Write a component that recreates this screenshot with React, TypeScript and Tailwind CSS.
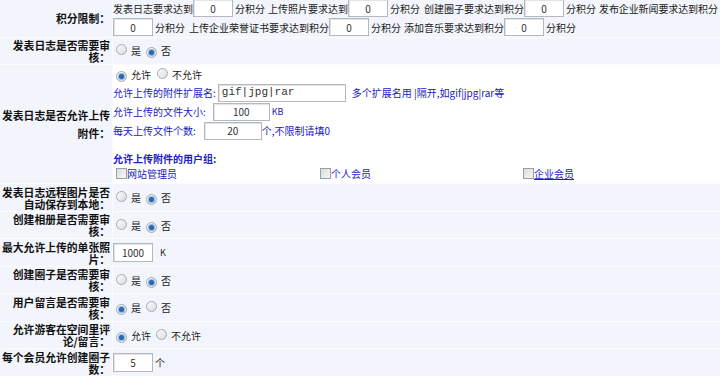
import { ReactNode } from "react";

const cn = (...c: (string | false | undefined)[]) => c.filter(Boolean).join(" ");

const Radio = ({ checked }: { checked?: boolean }) => (
  <span className="inline-flex h-[11px] w-[11px] shrink-0 items-center justify-center rounded-full border border-[#a4abb6] bg-linear-to-br from-[#fbfbfb] to-[#d9dce0]">
    {checked && <span className="h-[5px] w-[5px] rounded-full bg-[#2a68b0] shadow-[0_0_0_1px_#8fb6e0]" />}
  </span>
);

const Check = () => (
  <span className="inline-block h-[11px] w-[11px] shrink-0 border border-[#9a9ea6] bg-linear-to-br from-[#dcdcdc] to-[#f8f8f8]" />
);

const Box = ({ value, className, mono }: { value: string; className?: string; mono?: boolean }) => (
  <span
    className={cn(
      "inline-flex h-[18px] w-[40px] shrink-0 items-center justify-center border border-[#b4b9c1] bg-white text-[10px] text-[#333] shadow-[inset_1px_1px_0_#e4e4e4]",
      mono && "justify-start pl-[3px] font-['Liberation_Mono',monospace] text-[11px]",
      className
    )}
  >
    {value}
  </span>
);

const Row = ({
  label,
  children,
  labelClass,
  contentClass,
  className,
}: {
  label: string;
  children: ReactNode;
  labelClass?: string;
  contentClass?: string;
  className?: string;
}) => (
  <div className={cn("flex min-h-[26.5px]", className)}>
    <div className="flex w-[112px] shrink-0 items-center bg-[#f2f5fb] pr-[2px]">
      <div className={cn("w-full text-right text-[10.8px] font-bold leading-[12px] text-[#111]", labelClass)}>
        {label}
      </div>
    </div>
    <div className={cn("ml-[1px] flex flex-1 items-center bg-[#f2f5fb]", contentClass)}>{children}</div>
  </div>
);

const YesNo = ({ yes, a = "是", b = "否" }: { yes?: boolean; a?: string; b?: string }) => (
  <div className="flex items-center">
    <span className="ml-[3px]">
      <Radio checked={yes} />
    </span>
    <span className="ml-[4px]">{a}</span>
    <span className="ml-[5px]">
      <Radio checked={!yes} />
    </span>
    <span className="ml-[4px]">{b}</span>
  </div>
);

export default function App() {
  const blue = "text-[#2020c4]";
  return (
    <div className="h-[379px] w-[720px] overflow-hidden bg-white font-['Noto_Sans_CJK_SC',sans-serif] text-[10px] text-[#1a1a1a]">
      <div className="-mt-[1px] flex flex-col gap-[1px] bg-[#fbfcfe]">
        <Row label="积分限制：" className="h-[37.5px]" contentClass="flex-col items-start justify-center">
          <div className="flex h-[19px] items-center whitespace-nowrap">
            <span>发表日志要求达到</span>
            <Box value="0" />
            <span className="ml-[2px] mr-[3px]">分积分</span>
            <span>上传照片要求达到</span>
            <Box value="0" />
            <span className="ml-[2px] mr-[4px]">分积分</span>
            <span>创建圈子要求达到积分</span>
            <Box value="0" />
            <span className="ml-[2px] mr-[3px]">分积分</span>
            <span className="tracking-[-0.1px]">发布企业新闻要求达到积分</span>
          </div>
          <div className="flex h-[19px] items-center whitespace-nowrap">
            <Box value="0" />
            <span className="ml-[2px] mr-[4px]">分积分</span>
            <span>上传企业荣誉证书要求达到积分</span>
            <Box value="0" />
            <span className="ml-[2px] mr-[3px]">分积分</span>
            <span>添加音乐要求达到积分</span>
            <Box value="0" />
            <span className="ml-[2px]">分积分</span>
          </div>
        </Row>

        <Row label="发表日志是否需要审核：">
          <YesNo />
        </Row>

        <Row
          label="发表日志是否允许上传附件："
          labelClass="leading-[18px]"
          className="h-[118.25px]"
          contentClass="flex-col items-stretch justify-start bg-white"
        >
          <div className="flex h-[18px] items-center">
            <span className="ml-[3px]">
              <Radio checked />
            </span>
            <span className="ml-[4px]">允许</span>
            <span className="ml-[6px]">
              <Radio />
            </span>
            <span className="ml-[4px]">不允许</span>
          </div>
          <div className={cn("flex h-[19px] items-center whitespace-nowrap", blue)}>
            <span>允许上传的附件扩展名:</span>
            <Box value="gif|jpg|rar" mono className="ml-[2px] w-[128px]" />
            <span className="ml-[6px]">多个扩展名用 |隔开,如gif|jpg|rar等</span>
          </div>
          <div className={cn("flex h-[19px] items-center whitespace-nowrap", blue)}>
            <span>允许上传的文件大小:</span>
            <Box value="100" className="ml-[7px] w-[57px]" />
            <span className="ml-[2px] text-[9px]">KB</span>
          </div>
          <div className={cn("flex h-[19px] items-center whitespace-nowrap", blue)}>
            <span>每天上传文件个数:</span>
            <Box value="20" className="ml-[8px] w-[58px]" />
            <span>个,不限制请填0</span>
          </div>
          <div className={cn("mt-[10px] flex h-[16px] items-center font-bold", blue)}>允许上传附件的用户组:</div>
          <div className={cn("grid h-[12px] grid-cols-[204px_203px_1fr] items-center", blue)}>
            <div className="ml-[3px] flex items-center">
              <Check />
              <span>网站管理员</span>
            </div>
            <div className="ml-[3px] flex items-center">
              <Check />
              <span>个人会员</span>
            </div>
            <div className="ml-[3px] flex items-center">
              <Check />
              <span className="underline">企业会员</span>
            </div>
          </div>
        </Row>

        <Row label="发表日志远程图片是否自动保存到本地：">
          <YesNo />
        </Row>
        <Row label="创建相册是否需要审核：">
          <YesNo />
        </Row>
        <Row label="最大允许上传的单张照片：">
          <Box value="1000" className="h-[19px]" />
          <span className="ml-[7px] text-[9px]">K</span>
        </Row>
        <Row label="创建圈子是否需要审核：">
          <YesNo />
        </Row>
        <Row label="用户留言是否需要审核：">
          <YesNo yes />
        </Row>
        <Row label="允许游客在空间里评论/留言：">
          <YesNo yes a="允许" b="不允许" />
        </Row>
        <Row label="每个会员允许创建圈子数：">
          <Box value="5" className="h-[19px]" />
          <span className="ml-[2px]">个</span>
        </Row>
      </div>
    </div>
  );
}
